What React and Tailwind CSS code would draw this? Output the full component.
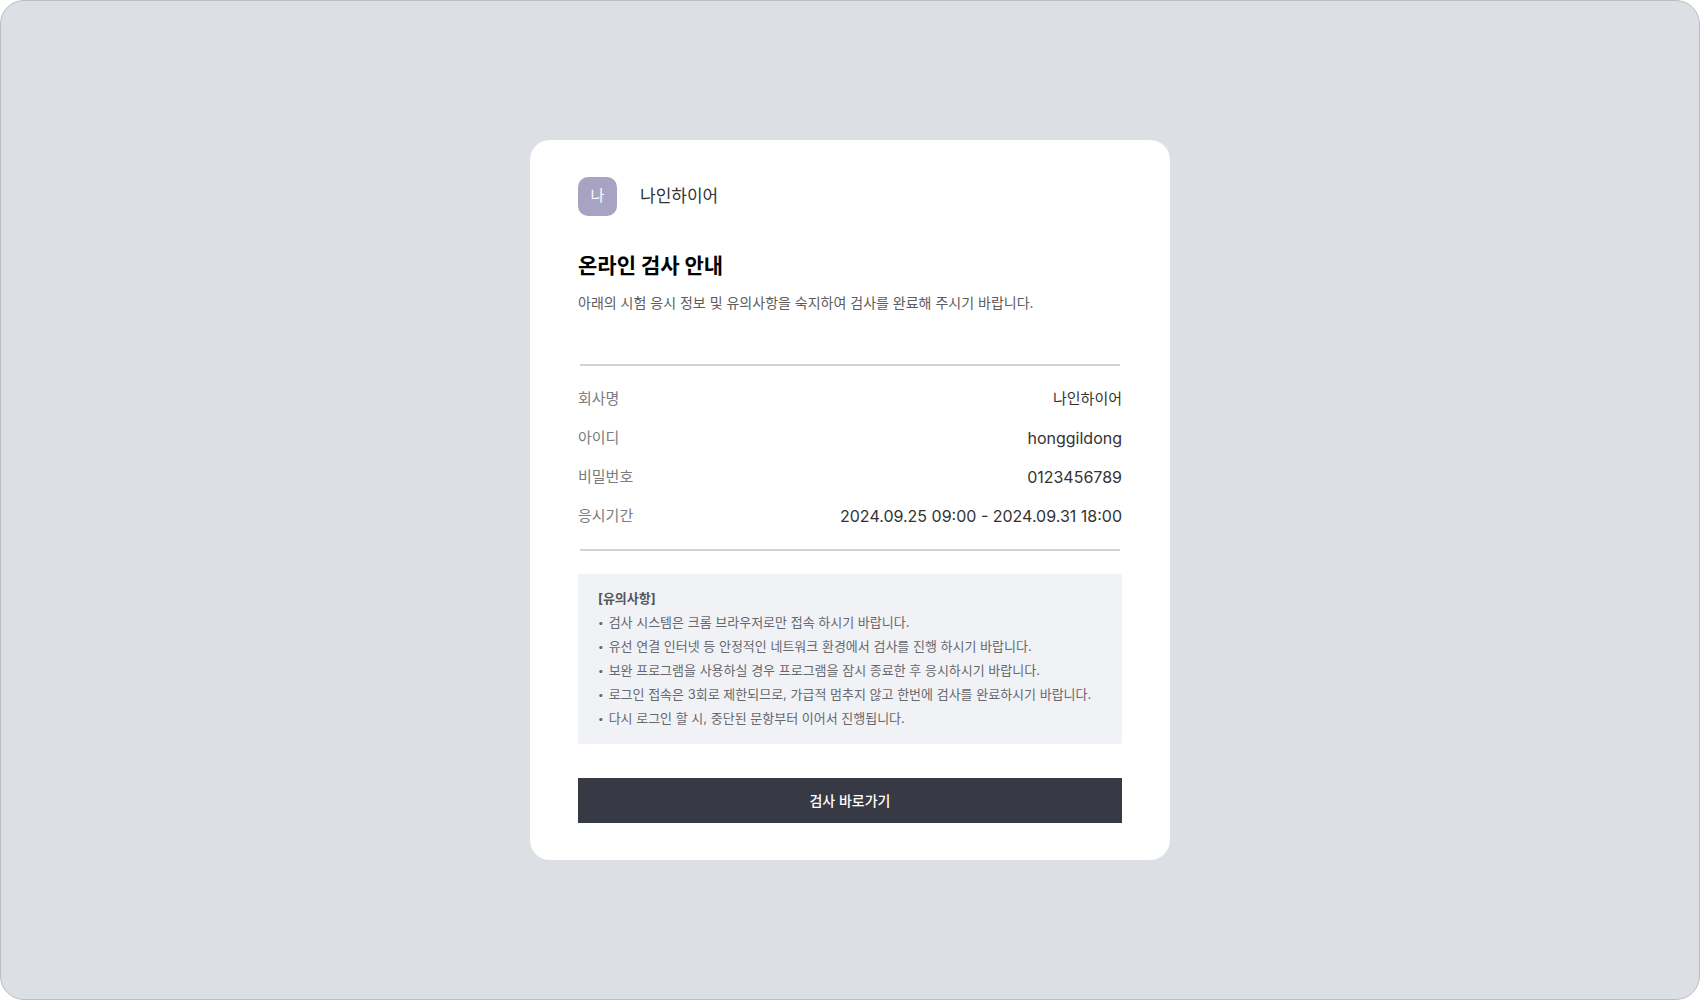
import React from "react";

const examInfo = [
  { label: "회사명", value: "나인하이어", size: "text-[15px]" },
  { label: "아이디", value: "honggildong", size: "text-base" },
  { label: "비밀번호", value: "0123456789", size: "text-base" },
  {
    label: "응시기간",
    value: "2024.09.25 09:00 - 2024.09.31 18:00",
    size: "text-base",
  },
];

const notices = [
  "검사 시스템은 크롬 브라우저로만 접속 하시기 바랍니다.",
  "유선 연결 인터넷 등 안정적인 네트워크 환경에서 검사를 진행 하시기 바랍니다.",
  "보완 프로그램을 사용하실 경우 프로그램을 잠시 종료한 후 응시하시기 바랍니다.",
  "로그인 접속은 3회로 제한되므로, 가급적 멈추지 않고 한번에 검사를 완료하시기 바랍니다.",
  "다시 로그인 할 시, 중단된 문항부터 이어서 진행됩니다.",
];

export default function App() {
  return (
    <div className="min-h-screen flex items-center justify-center rounded-3xl border border-[#b9bdc4] bg-[#dcdfe4] font-['Inter','Noto_Sans_CJK_KR',sans-serif]">
      <main className="w-full max-w-[640px] rounded-[20px] bg-white px-12 py-[37px]">
        <header className="flex items-center gap-[23px]">
          <div className="flex size-[39px] items-center justify-center rounded-[10px] bg-[#a8a2c3] text-[15px] text-white">
            나
          </div>
          <span className="text-[17px] text-[#333333]">나인하이어</span>
        </header>

        <h1 className="mt-[34px] text-[21px] leading-8 font-bold text-black">
          온라인 검사 안내
        </h1>
        <p className="mt-[9px] text-sm leading-6 text-[#5c5c5c]">
          아래의 시험 응시 정보 및 유의사항을 숙지하여 검사를 완료해 주시기 바랍니다.
        </p>

        <hr className="mx-0.5 mt-[49px] border-t-2 border-[#d2d3d5]" />
        <dl className="flex flex-col gap-[15px] py-[21px] text-[15px] leading-6">
          {examInfo.map((item) => (
            <div key={item.label} className="flex justify-between">
              <dt className="text-[#7a7c80]">{item.label}</dt>
              <dd className={`${item.size} leading-6 text-[#333333]`}>
                {item.value}
              </dd>
            </div>
          ))}
        </dl>
        <hr className="mx-0.5 border-t-2 border-[#d2d3d5]" />

        <section className="mt-[23px] rounded-xs bg-[#f1f2f6] px-5 pt-3 pb-[14px] text-[13px] leading-6 text-[#66686d]">
          <h2 className="font-bold text-[#55575c]">[유의사항]</h2>
          <ul>
            {notices.map((notice) => (
              <li key={notice} className="flex gap-[5px]">
                <span className="text-[10px]">•</span>
                {notice}
              </li>
            ))}
          </ul>
        </section>

        <button
          type="button"
          className="mt-[34px] h-[45px] w-full bg-[#373a45] text-sm font-medium text-white"
        >
          검사 바로가기
        </button>
      </main>
    </div>
  );
}
